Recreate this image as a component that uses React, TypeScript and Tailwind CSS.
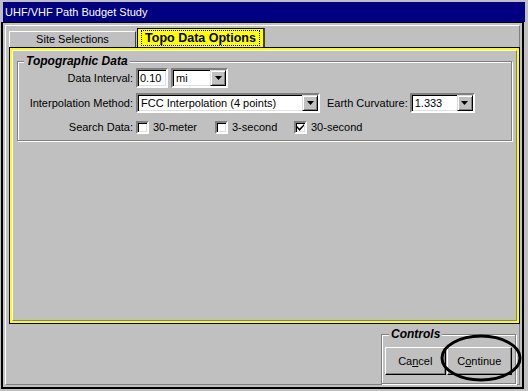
import type { ReactNode } from 'react';

const font = { fontFamily: '"Liberation Sans", Arial, sans-serif' };

function Sunken({ children, className = '' }: { children?: ReactNode; className?: string }) {
  return (
    <div
      className={`border-2 border-t-[#808080] border-l-[#808080] border-b-white border-r-white shadow-[inset_1px_1px_0_#000,inset_-1px_-1px_0_#dfdfdf] bg-white ${className}`}
    >
      {children}
    </div>
  );
}

function DropButton() {
  return (
    <div className="w-[16px] h-[16px] bg-[#c0c0c0] border border-t-[#dfdfdf] border-l-[#dfdfdf] border-b-black border-r-black shadow-[inset_1px_1px_0_#fff,inset_-1px_-1px_0_#808080] flex items-center justify-center">
      <svg width="7" height="4" viewBox="0 0 7 4">
        <path d="M0 0h7L3.5 4z" fill="#000" />
      </svg>
    </div>
  );
}

function Select({ value, width }: { value: string; width: string }) {
  return (
    <Sunken className={`${width} h-[20px] flex items-center justify-between pl-[3px]`}>
      <span className="leading-none">{value}</span>
      <DropButton />
    </Sunken>
  );
}

function Check({ label, checked = false }: { label: string; checked?: boolean }) {
  return (
    <div className="flex items-center gap-[4px]">
      <Sunken className="w-[13px] h-[13px] flex items-center justify-center">
        {checked && (
          <svg width="7" height="7" viewBox="0 0 7 7">
            <path d="M0 2l2.5 2.5L7 0v2L2.5 7L0 4z" fill="#000" />
          </svg>
        )}
      </Sunken>
      <span>{label}</span>
    </div>
  );
}

function Button({ children, width }: { children: ReactNode; width: string }) {
  return (
    <div
      className={`${width} h-[28px] flex items-center justify-center border border-t-white border-l-white border-b-black border-r-black shadow-[inset_-1px_-1px_0_#808080] bg-[#c0c0c0]`}
    >
      {children}
    </div>
  );
}

export default function App() {
  return (
    <div className="relative w-[528px] h-[391px] bg-[#c0c0c0] text-[11px] text-black pt-[2px]" style={font}>
      {/* title bar */}
      <div className="ml-[3px] w-[522px] h-[20px] bg-[#000080] text-white flex items-center pl-[2px] text-[11px]">
        UHF/VHF Path Budget Study
      </div>

      {/* window frame */}
      <div className="ml-[1px] w-[523px] h-[367px] border-t border-x-2 border-b-2 border-black p-[2px]">
        <div className="h-full border border-t-white border-l-white border-b-[#808080] border-r-[#808080] flex flex-col px-[3px] pt-[2px]">
          {/* tabs */}
          <div className="flex items-end h-[19px]">
            <div className="w-[127px] h-[16px] border-t border-l border-white border-r border-r-[#404040] flex items-center justify-center">
              Site Selections
            </div>
            <div className="w-[128px] h-[19px] ml-[1px] bg-[#ffff00] border-t border-l border-r-2 border-t-black border-l-black border-r-[#404040] flex items-center justify-center">
              <span className="font-bold text-[12.5px] leading-[14px] px-[3px] outline-1 outline-dotted outline-black">
                Topo Data Options
              </span>
            </div>
          </div>

          {/* tab page */}
          <div className="w-[511px] h-[279px] border border-black">
            <div className="h-full border-2 border-[#ffff00]">
              <div className="h-full border border-t-white border-l-white border-b-[#808080] border-r-[#808080] px-[4px] pt-[10px]">
                {/* group box */}
                <div className="relative h-[80px] border border-[#808080] shadow-[1px_1px_0_#fff,inset_1px_1px_0_#fff]">
                  <div className="absolute left-[6px] -top-[8px] px-[2px] bg-[#c0c0c0] font-bold italic text-[12px] leading-[14px]">
                    Topographic Data
                  </div>
                  <div className="flex flex-col pt-[6px]">
                    <div className="flex items-center h-[20px]">
                      <div className="w-[116px] text-right pr-[1px]">Data Interval:</div>
                      <Sunken className="ml-[2px] w-[32px] h-[20px] flex items-center pl-[2px]">0.10</Sunken>
                      <div className="ml-[3px]">
                        <Select value="mi" width="w-[57px]" />
                      </div>
                    </div>
                    <div className="flex items-center h-[20px] mt-[5px]">
                      <div className="w-[116px] text-right pr-[1px]">Interpolation Method:</div>
                      <div className="ml-[2px]">
                        <Select value="FCC Interpolation (4 points)" width="w-[184px]" />
                      </div>
                      <div className="ml-[7px] mr-[2px]">Earth Curvature:</div>
                      <Select value="1.333" width="w-[65px]" />
                    </div>
                    <div className="flex items-center h-[16px] mt-[6px]">
                      <div className="w-[116px] text-right pr-[1px]">Search Data:</div>
                      <div className="ml-[2px] w-[79px]">
                        <Check label="30-meter" />
                      </div>
                      <div className="w-[79px]">
                        <Check label="3-second" />
                      </div>
                      <Check label="30-second" checked />
                    </div>
                  </div>
                </div>
              </div>
            </div>
          </div>

          {/* controls */}
          <div className="flex justify-end mt-[10px]">
            <div className="relative w-[135px] h-[50px] border border-[#808080] shadow-[1px_1px_0_#fff,inset_1px_1px_0_#fff] flex items-end gap-[1px] px-[3px] pb-[8px]">
              <div className="absolute left-[7px] -top-[8px] px-[2px] bg-[#c0c0c0] font-bold italic text-[12px] leading-[14px]">
                Controls
              </div>
              <Button width="w-[61px]">
                <span>
                  Ca<span className="underline">n</span>cel
                </span>
              </Button>
              <Button width="w-[66px]">
                <span>
                  C<span className="underline">o</span>ntinue
                </span>
              </Button>
            </div>
          </div>
        </div>
      </div>

      {/* hand-drawn ellipse around Continue */}
      <svg className="absolute left-0 top-0 pointer-events-none" width="528" height="391">
        <ellipse cx="481" cy="358" rx="39" ry="22" fill="none" stroke="#000" strokeWidth="3" />
      </svg>
    </div>
  );
}
